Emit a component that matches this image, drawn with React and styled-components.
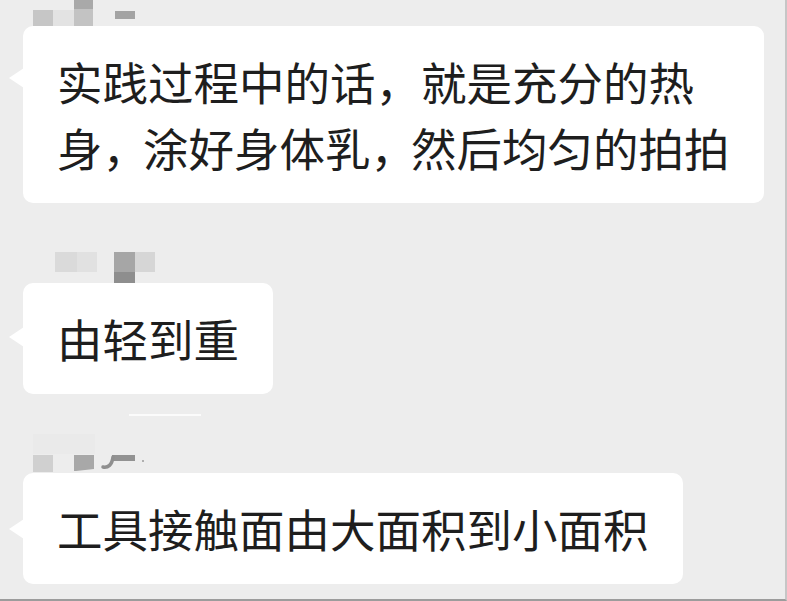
import React from "react";
import styled, { createGlobalStyle } from "styled-components";

const Global = createGlobalStyle`
  html, body { margin: 0; padding: 0; background: #ededed; }
  body { font-family: "Noto Sans CJK SC", "Noto Sans", sans-serif; }
`;

const Page = styled.div`
  box-sizing: border-box;
  width: 787px;
  height: 601px;
  background: #ededed;
  border-right: 2px solid #c6c6c6;
  border-bottom: 2px solid #9c9c9c;
  display: flex;
  flex-direction: column;
  overflow: hidden;
`;

const Group = styled.section`
  display: flex;
  flex-direction: column;
  align-items: flex-start;
`;

const NameArea = styled.svg`
  display: block;
  width: 240px;
  height: ${(p) => p.$h}px;
  flex: none;
`;

const Bubble = styled.div`
  position: relative;
  margin-left: 23px;
  box-sizing: border-box;
  background: #ffffff;
  border-radius: 10px;
  padding: 22px 34px 23px 34px;
  font-size: 45.5px;
  line-height: 66px;
  color: #1e1e1e;
  letter-spacing: 0;
  white-space: nowrap;

  &::before {
    content: "";
    position: absolute;
    left: -14px;
    top: ${(p) => p.$tail}px;
    width: 0;
    height: 0;
    border-top: 10px solid transparent;
    border-bottom: 10px solid transparent;
    border-right: 15px solid #ffffff;
  }
`;

const Punct = styled.span`
  letter-spacing: ${(p) => p.$trim || 0}px;
`;

function Mosaic({ h, children }) {
  return (
    <NameArea $h={h} viewBox={`0 0 240 ${h}`} aria-hidden="true">
      {children}
    </NameArea>
  );
}

export default function App() {
  return (
    <>
      <Global />
      <Page>
        <Group>
          <Mosaic h={26}>
            <rect x="33" y="10" width="20" height="16" fill="#c6c6c6" />
            <rect x="53" y="10" width="21" height="16" fill="#e3e3e3" />
            <rect x="74" y="0" width="19" height="9" fill="#a9a9a9" />
            <rect x="74" y="9" width="19" height="17" fill="#c3c3c3" />
            <rect x="115" y="11" width="20" height="8" fill="#a3a3a3" />
          </Mosaic>
          <Bubble $tail={42}>
            实践过程中的话，就是充分的热
            <br />
            身<Punct $trim={-5}>，</Punct>涂好身体乳<Punct $trim={-5}>，</Punct>然后均匀的拍拍
          </Bubble>
        </Group>

        <Group>
          <Mosaic h={80}>
            <rect x="55" y="49" width="22" height="20" fill="#dadada" />
            <rect x="77" y="49" width="20" height="20" fill="#e1e1e1" />
            <rect x="114" y="49" width="21" height="20" fill="#a6a6a6" />
            <rect x="114" y="69" width="21" height="11" fill="#8e8e8e" />
            <rect x="135" y="49" width="20" height="20" fill="#d6d6d6" />
          </Mosaic>
          <Bubble $tail={44}>由轻到重</Bubble>
        </Group>

        <Group>
          <Mosaic h={79}>
            <rect x="129" y="20" width="72" height="2" fill="#fbfbfb" />
            <rect x="33" y="40" width="62" height="20" fill="#eaeaea" />
            <rect x="33" y="61" width="20" height="17" fill="#d0d0d0" />
            <polygon points="74,61 94,61 94,75 76,77 74,77" fill="#a8a8a8" />
            <rect x="112" y="61" width="23" height="6" fill="#929292" />
            <path d="M113 63 C 112 71, 108 74, 103 73" stroke="#8f8f8f" strokeWidth="3.5" fill="none" strokeLinecap="round" />
            <circle cx="143" cy="67" r="1" fill="#9a9a9a" />
          </Mosaic>
          <Bubble $tail={46}>工具接触面由大面积到小面积</Bubble>
        </Group>
      </Page>
    </>
  );
}
